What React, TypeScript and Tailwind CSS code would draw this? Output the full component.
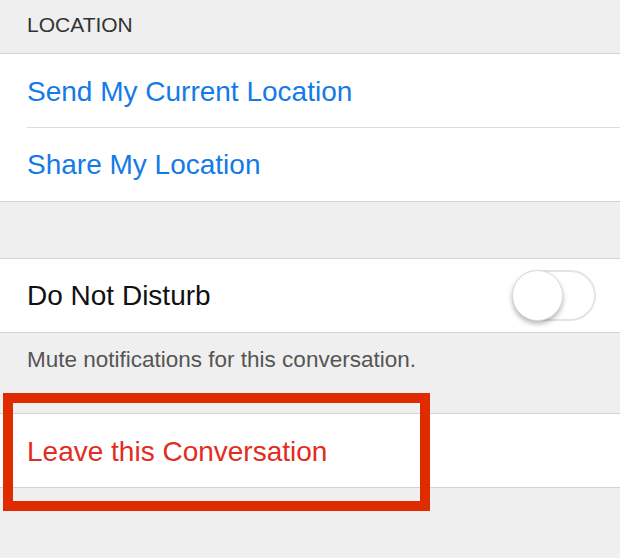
const font = { fontFamily: '"Liberation Sans", Arial, Helvetica, sans-serif' }

const Toggle = () => (
  <div className="relative w-[84px] h-[51px] rounded-full border-2 border-[#e4e4e4] bg-white">
    <div className="absolute -left-[2px] -top-[2px] w-[51px] h-[51px] rounded-full bg-white border border-[#dcdcdc] shadow-[0_3px_5px_rgba(0,0,0,0.28)]" />
  </div>
)

export default function App() {
  return (
    <div className="relative w-[620px] h-[558px] bg-[#efefef] overflow-hidden" style={font}>
      <div className="h-[54px] border-b border-[#d2d2d2] pl-[27px] pt-[14px]">
        <span className="block text-[21px] leading-none text-[#333]">LOCATION</span>
      </div>

      <div className="bg-white border-b border-[#d2d2d2]">
        <div className="ml-[27px] h-[74px] border-b border-[#dcdcdc] flex items-center pt-[2px]">
          <span className="text-[28px] leading-none text-[#137ae8]">Send My Current Location</span>
        </div>
        <div className="pl-[27px] h-[73px] flex items-center pt-[1px]">
          <span className="text-[28px] leading-none text-[#137ae8]">Share My Location</span>
        </div>
      </div>

      <div className="h-[57px] border-b border-[#d2d2d2]" />

      <div className="bg-white h-[74px] border-b border-[#d2d2d2] flex items-center justify-between pl-[27px] pr-[24px]">
        <span className="text-[28px] leading-none text-[#111]">Do Not Disturb</span>
        <Toggle />
      </div>

      <div className="h-[81px] border-b border-[#d2d2d2] pl-[27px] pt-[16px]">
        <span className="block text-[22.5px] leading-none text-[#555]">Mute notifications for this conversation.</span>
      </div>

      <div className="bg-white h-[74px] border-b border-[#d2d2d2] pl-[27px] flex items-center pt-[2px]">
        <span className="text-[28px] leading-none text-[#e32b1e]">Leave this Conversation</span>
      </div>

      <div className="absolute left-[3px] top-[393px] w-[427px] h-[118px] border-[10px] border-[#e02a00]" />
    </div>
  )
}
